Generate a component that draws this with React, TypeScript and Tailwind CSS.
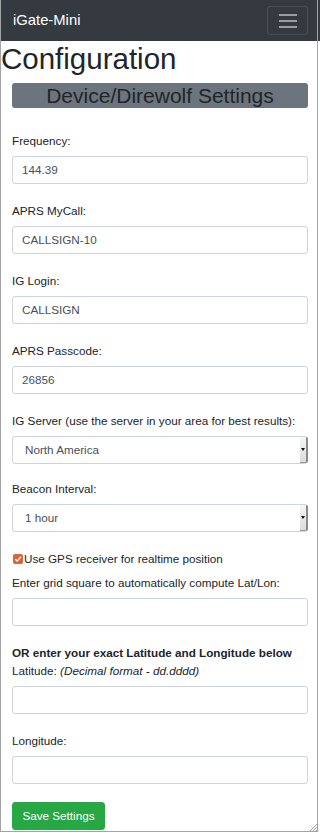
import React from 'react';

const fields = [
  { label: 'Frequency:', value: '144.39' },
  { label: 'APRS MyCall:', value: 'CALLSIGN-10' },
  { label: 'IG Login:', value: 'CALLSIGN' },
  { label: 'APRS Passcode:', value: '26856' },
];

const selects = [
  { label: 'IG Server (use the server in your area for best results):', value: 'North America' },
  { label: 'Beacon Interval:', value: '1 hour' },
];

function TextInput({ value = '' }: { value?: string }) {
  return (
    <div className="h-[28px] w-full border border-[#ced4da] rounded-[3px] bg-white flex items-center px-[9px] text-[11.7px] text-[#495057]">
      {value}
    </div>
  );
}

function SelectBox({ value }: { value: string }) {
  return (
    <div className="h-[28px] w-full border border-[#ced4da] rounded-[3px] bg-white flex items-stretch text-[11.7px] text-[#495057]">
      <span className="flex-1 flex items-center pl-[12px]">{value}</span>
      {/* native-looking dropdown button */}
      <span className="w-[8px] -mr-px bg-gradient-to-b from-[#f6f6f6] to-[#dcdcdc] border-r-2 border-b border-r-[#8a8a8a] border-b-[#9a9a9a] rounded-r-[2px] flex items-center justify-center">
        <svg width="4" height="3" viewBox="0 0 4 3">
          <path d="M0 0h4L2 3z" fill="#111" />
        </svg>
      </span>
    </div>
  );
}

export default function App() {
  return (
    <div className="relative w-[320px] h-[833px] overflow-hidden bg-white text-[#212529] font-['Liberation_Sans',Arial,sans-serif]">
      {/* Navbar */}
      <nav className="h-[41px] bg-[#343a40] flex items-center justify-between px-3">
        <span className="text-[14.8px] text-white leading-none pl-px">iGate-Mini</span>
        <button className="w-[41px] h-[29px] rounded-[3px] border border-white/10 flex flex-col items-center justify-center gap-[4px]">
          <span className="block w-[18px] h-[2px] bg-[#9b9da0]" />
          <span className="block w-[18px] h-[2px] bg-[#9b9da0]" />
          <span className="block w-[18px] h-[2px] bg-[#9b9da0]" />
        </button>
      </nav>

      <h1 className="text-[29.5px] leading-[36px] font-normal mb-[6px] pl-px">Configuration</h1>

      <div className="px-3">
        <h3 className="h-[25px] bg-[#6c757d] rounded-[3px] text-center text-[21px] leading-[25px] text-[#212529]">
          Device/Direwolf Settings
        </h3>

        <form className="pt-6 text-[11.7px]">
          {fields.map((f) => (
            <div key={f.label} className="mb-[18px]">
              <label className="block leading-[18px] mb-[6px]">{f.label}</label>
              <TextInput value={f.value} />
            </div>
          ))}

          {selects.map((s) => (
            <div key={s.label} className="mb-[16px]">
              <label className="block leading-[18px] mb-[6px]">{s.label}</label>
              <SelectBox value={s.value} />
            </div>
          ))}

          <div className="flex items-center leading-[18px] mt-[18px]">
            <span className="ml-px w-[10px] h-[10px] rounded-[2px] bg-[#d9653b] flex items-center justify-center">
              <svg width="8" height="8" viewBox="0 0 8 8">
                <path d="M1.2 4.2 3.2 6.1 6.9 1.8" fill="none" stroke="#fff" strokeWidth="1.4" />
              </svg>
            </span>
            <span className="ml-px">Use GPS receiver for realtime position</span>
          </div>

          <div className="mt-[6px] mb-[18px]">
            <label className="block leading-[18px] mb-[6px]">
              Enter grid square to automatically compute Lat/Lon:
            </label>
            <TextInput />
          </div>

          <p className="leading-[18px] font-bold">OR enter your exact Latitude and Longitude below</p>
          <div className="mb-[18px]">
            <label className="block leading-[18px] mb-[6px]">
              Latitude: <i>(Decimal format - dd.dddd)</i>
            </label>
            <TextInput />
          </div>

          <div className="mb-[18px]">
            <label className="block leading-[18px] mb-[6px]">Longitude:</label>
            <TextInput />
          </div>

          <button
            type="button"
            className="h-[28px] w-[93px] rounded-[3px] bg-[#28a745] border border-[#28a745] text-white text-[11.7px]"
          >
            Save Settings
          </button>
        </form>
      </div>

      {/* frame border of the resizable viewer */}
      <div className="pointer-events-none absolute left-0 top-0 w-[318px] h-[832px] border-l border-r border-b border-[#a3a3a3]">
        <svg className="absolute right-0 bottom-0" width="8" height="8" viewBox="0 0 8 8">
          <path d="M8 1 1 8M8 4 4 8M8 7 7 8" stroke="#9a9a9a" strokeWidth="1" />
        </svg>
      </div>
    </div>
  );
}
